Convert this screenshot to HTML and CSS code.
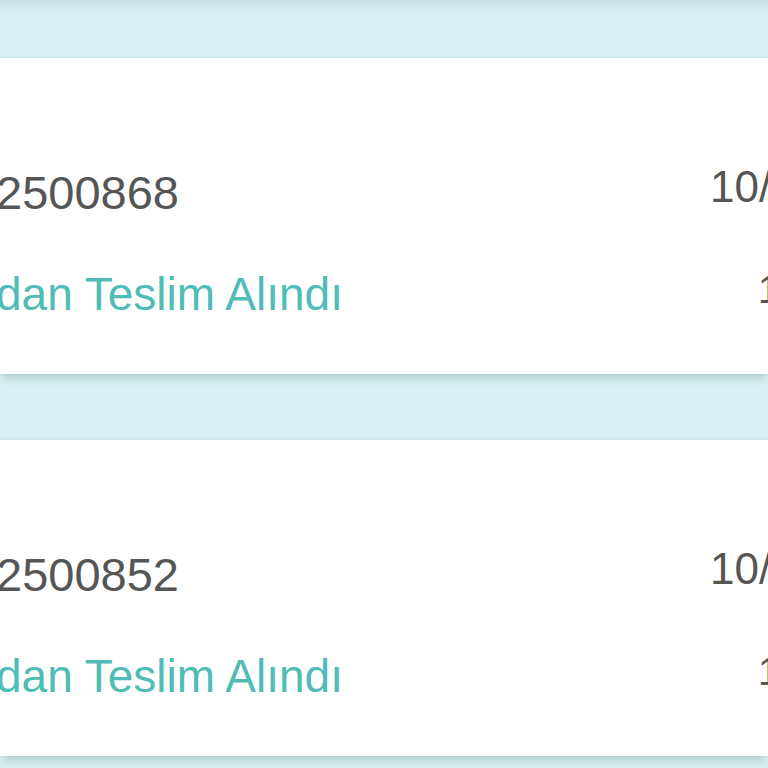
FILE: index.html
```html
<!DOCTYPE html>
<html lang="tr">
<head>
    <meta charset="UTF-8">
    <meta name="viewport" content="width=device-width, initial-scale=1.0">
    <title>Gönderiler</title>
    <link rel="stylesheet" href="styles.css">
</head>
<body>
    <main class="list">
        <div class="card">
            <div class="row top">
                <span class="code">2500868</span>
                <span class="date">10/06/2023</span>
            </div>
            <div class="row bottom">
                <span class="status">dan Teslim Alındı</span>
                <span class="time">14:25</span>
            </div>
        </div>
        <div class="card">
            <div class="row top">
                <span class="code">2500852</span>
                <span class="date">10/06/2023</span>
            </div>
            <div class="row bottom">
                <span class="status">dan Teslim Alındı</span>
                <span class="time">13:10</span>
            </div>
        </div>
    </main>
</body>
</html>
```

FILE: styles.css
```css
body {
    font-family: "Liberation Sans", Arial, sans-serif;
    background: linear-gradient(#c6dfe0 0, #d9f0f2 12px) #d9f0f2;
    margin: 0;
    padding: 0;
    overflow: hidden;
    height: 768px;
}
.list {
    padding-top: 58px;
    display: flex;
    flex-direction: column;
    gap: 66px;
}
.card {
    background-color: #fff;
    height: 316px;
    box-sizing: border-box;
    padding-top: 107px;
    box-shadow: 0 7px 9px -3px rgba(60, 110, 100, 0.28), 0 -1px 3px rgba(60, 110, 110, 0.1);
    overflow: hidden;
}
.row {
    display: grid;
    grid-template-columns: 714px 1fr;
    margin-left: -4px;
    white-space: nowrap;
}
.row.top {
    line-height: 56px;
}
.row.bottom {
    line-height: 56px;
    margin-top: 45px;
}
.code {
    font-size: 47px;
    color: #555;
}
.date {
    font-size: 44px;
    color: #555;
    margin-top: -6px;
}
.status {
    font-size: 46px;
    color: #4fbdb5;
}
.time {
    font-size: 38px;
    color: #555;
    padding-left: 48px;
    margin-top: -4px;
}
```
